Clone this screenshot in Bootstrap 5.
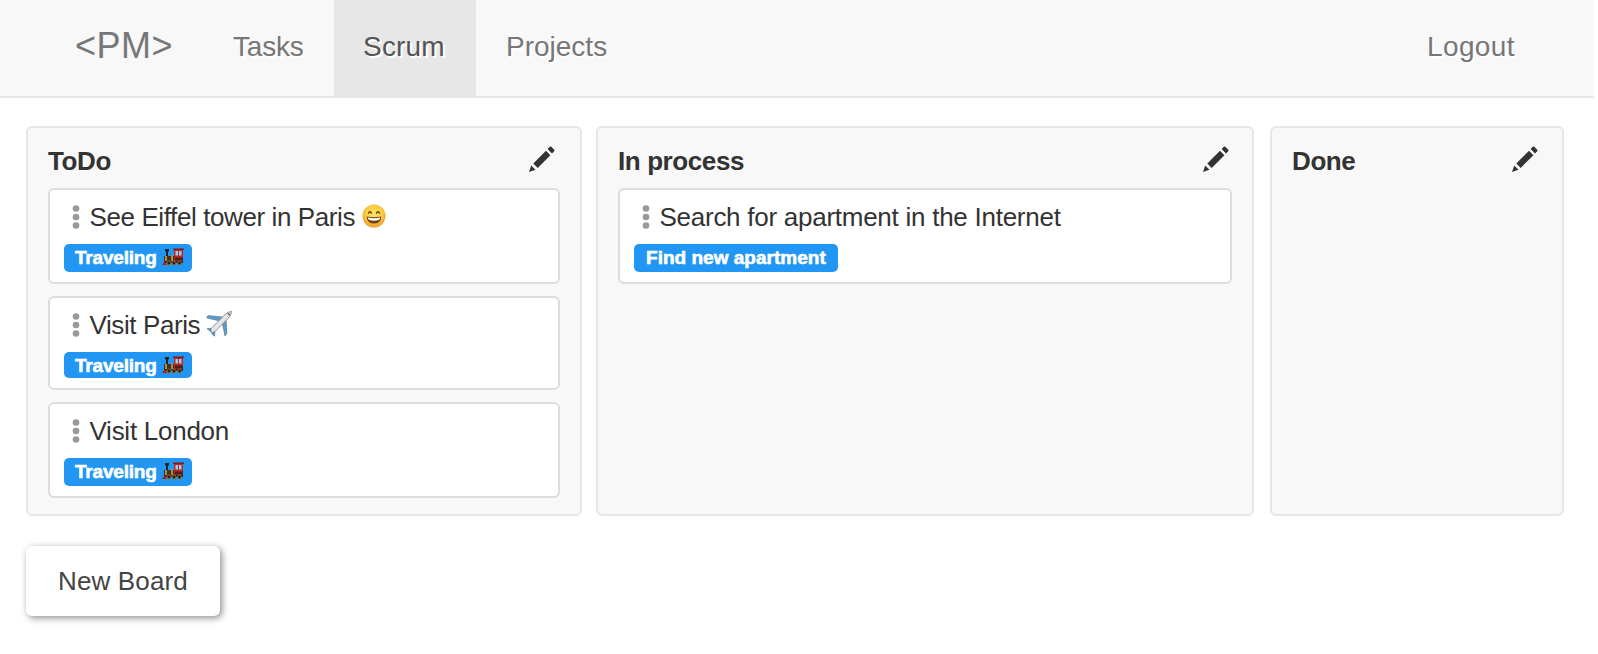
<!DOCTYPE html>
<html lang="en">
<head>
<meta charset="utf-8">
<title>PM – Scrum</title>
<link rel="stylesheet" href="https://cdn.jsdelivr.net/npm/bootstrap@5.3.0/dist/css/bootstrap.min.css">
<style>
body{font-family:"Liberation Sans",Arial,sans-serif;color:#333;background:#fff;padding-right:4px}
.topbar{background:#f8f8f8;border-bottom:2px solid #e7e7e7;height:98px;padding:0 50px 0 46px}
.topbar .navbar-brand{font-size:36px;line-height:92px;height:96px;color:#777;padding:0;margin:0;width:158px;padding-left:29px;letter-spacing:.5px}
.topbar .navbar-nav .nav-link{font-size:28px;line-height:93px;height:98px;color:#777;padding:0 29px;text-shadow:2px 2px 0 #fff}
.topbar .navbar-nav .nav-link.active{background:#e7e7e7;color:#555;width:142px;letter-spacing:.2px}
.topbar .navbar-nav .nav-tasks{width:130px;letter-spacing:-.2px}
.topbar .navbar-nav .nav-projects{padding-left:30px}
.topbar .navbar-nav .nav-logout{letter-spacing:.4px}
.boards{display:grid;grid-template-columns:556px 658px 294px;column-gap:14px;padding:28px 0 0 26px}
.board{background:#f8f8f8;border:2px solid #e7e7e7;border-radius:6px;height:390px;padding:0 20px}
.board-done{margin:0 -2px 0 2px}
.board-head{height:60px;padding-top:6px}
.board-head h2{font-size:26px;font-weight:700;line-height:54px;margin:0;letter-spacing:-.4px}
.pencil{width:26px;height:26px;margin:12px 4px 0 0;fill:#333}
.pencil-todo{margin-right:5px}
.pencil-process{margin-right:3px}
.task{background:#fff;border:2px solid #ddd;border-radius:6px;padding:0 14px 10px;margin-bottom:12px}
.task-title{font-size:26px;line-height:54px;height:54px;padding-left:8px;letter-spacing:-.26px}
.snug{letter-spacing:-.4px}
.grip{width:8px;height:24px;fill:#999;margin-right:10px;margin-left:-.5px}
.tag{background:#2196f3;color:#fff;font-size:19px;font-weight:700;line-height:27px;height:28px;border-radius:5px;padding:0 8px 0 11px;width:128px;-webkit-text-stroke:.6px #fff;letter-spacing:-.2px;white-space:nowrap}
.tag-short{height:26px}
.tag-wide{width:204px;padding-left:12px;letter-spacing:.02px}
.smile{margin-left:7px;margin-top:-2px}
.plane{margin-left:6px;margin-top:-2px}
.new-board{font-size:26px;line-height:70px;height:70px;width:194px;padding:0;border:0;border-radius:6px;background:#fff;color:#444;margin:30px 0 0 26px;letter-spacing:.15px;box-shadow:2px 2px 7px rgba(0,0,0,.45)}
</style>
</head>
<body>
<svg class="d-none">
  <symbol id="pencil" viewBox="0 0 26 26"><path d="M0 26 2.2 19.5 6.5 23.8ZM4.3 17.5 17 4.8 21.4 9.2 8.7 21.9ZM18.6 3 20.8.8Q21.5 0 22.3.8L25.2 3.7Q26 4.5 25.2 5.2L23 7.4Z"/></symbol>
  <symbol id="grip" viewBox="0 0 8 24"><circle cx="4" cy="3.5" r="3.3"/><circle cx="4" cy="12" r="3.3"/><circle cx="4" cy="20.5" r="3.3"/></symbol>
  <symbol id="train" viewBox="0 0 22 18">
    <path d="M3 1h4v2L6 4v4H4V4L3 3Z" fill="#222"/><path d="M2 8h11v6H2Z" fill="#3a302c"/><path d="M3 8h2v5H3ZM9 7h2v6H9Z" fill="#b98a35"/>
    <path d="M12 1h9v13h-9Z" fill="#c8201d"/><path d="M11 .5h11v1.3H11Z" fill="#7d1713"/><path d="M13.5 3h2.5v4.5h-2.5ZM17 3h2.5v4.5H17Z" fill="#8bd5ee"/>
    <path d="M13 9.5h8v3h-8Z" fill="#43231f"/><path d="M2 13h19v2H2Z" fill="#222"/><path d="m0 17 3-4 2 4Z" fill="#b51c18"/>
    <g fill="#28221f" stroke="#a87c30" stroke-width=".8"><circle cx="7" cy="15" r="2"/><circle cx="12" cy="15" r="2"/><circle cx="17.5" cy="15" r="2"/></g>
  </symbol>
</svg>
<nav class="topbar navbar navbar-expand align-items-start">
  <a class="navbar-brand" href="#">&lt;PM&gt;</a>
  <div class="navbar-nav flex-grow-1">
    <a class="nav-link nav-tasks" href="#">Tasks</a>
    <a class="nav-link active" href="#">Scrum</a>
    <a class="nav-link nav-projects" href="#">Projects</a>
    <a class="nav-link nav-logout ms-auto" href="#">Logout</a>
  </div>
</nav>
<main class="pb-5">
  <div class="boards">
    <section class="board">
      <div class="board-head d-flex justify-content-between align-items-start"><h2>ToDo</h2><svg class="pencil pencil-todo"><use href="#pencil"/></svg></div>
      <div class="task">
        <div class="task-title snug d-flex align-items-center"><svg class="grip"><use href="#grip"/></svg><span>See Eiffel tower in Paris</span>
          <svg width="24" height="24" viewBox="0 0 24 24" class="smile"><defs><radialGradient id="face" cx=".5" cy=".42" r=".56"><stop offset="0" stop-color="#ffe668"/><stop offset=".65" stop-color="#fdcb3f"/><stop offset="1" stop-color="#ef9c2c"/></radialGradient></defs><circle cx="12" cy="12" r="11.5" fill="url(#face)"/><path d="M6.3 9.6Q8 6 9.7 9.6M14.3 9.6Q16 6 17.7 9.6" fill="none" stroke="#6b3d10" stroke-width="1.4"/><path d="M4.6 12.5Q12 14 19.4 12.5 18.8 19.6 12 19.6T4.6 12.5Z" fill="#703f13"/><path d="M5.6 13.6Q12 15 18.4 13.6 18 16.8 12 16.8T5.6 13.6Z" fill="#fff"/></svg></div>
        <div class="tag d-flex align-items-start">Traveling<svg width="22" height="18" class="ms-auto mt-1"><use href="#train"/></svg></div>
      </div>
      <div class="task">
        <div class="task-title snug d-flex align-items-center"><svg class="grip"><use href="#grip"/></svg><span>Visit Paris</span>
          <svg width="26" height="26" viewBox="0 0 26 26" class="plane"><path d="M.8 6 2 4.6 18 6.2 14 10 1 7ZM20 8 20.8 22.5 19 25 16.3 12ZM1 17.8 7 17.3 9 19.6 8.5 25.2 6.8 24 5 20.8Z" fill="#5c9ccb" stroke="#416d90" stroke-width=".6"/><path d="M25.5.5Q22 .3 18.5 4L5.3 17.3Q4.3 20 5.5 21.2T9 20.5L21.5 8Q25.7 4 25.5.5Z" fill="#e4e5e7" stroke="#77797d" stroke-width=".8"/><path d="m21.8 2.4 2 1.9" stroke="#47525e" stroke-width="1.2"/></svg></div>
        <div class="tag tag-short d-flex align-items-start">Traveling<svg width="22" height="18" class="ms-auto mt-1"><use href="#train"/></svg></div>
      </div>
      <div class="task">
        <div class="task-title d-flex align-items-center"><svg class="grip"><use href="#grip"/></svg><span>Visit London</span></div>
        <div class="tag d-flex align-items-start">Traveling<svg width="22" height="18" class="ms-auto mt-1"><use href="#train"/></svg></div>
      </div>
    </section>
    <section class="board">
      <div class="board-head d-flex justify-content-between align-items-start"><h2>In process</h2><svg class="pencil pencil-process"><use href="#pencil"/></svg></div>
      <div class="task">
        <div class="task-title d-flex align-items-center"><svg class="grip"><use href="#grip"/></svg><span>Search for apartment in the Internet</span></div>
        <div class="tag tag-wide">Find new apartment</div>
      </div>
    </section>
    <section class="board board-done">
      <div class="board-head d-flex justify-content-between align-items-start"><h2>Done</h2><svg class="pencil"><use href="#pencil"/></svg></div>
    </section>
  </div>
  <button class="new-board btn">New Board</button>
</main>
<script src="https://cdn.jsdelivr.net/npm/bootstrap@5.3.0/dist/js/bootstrap.bundle.min.js"></script>
</body>
</html>
